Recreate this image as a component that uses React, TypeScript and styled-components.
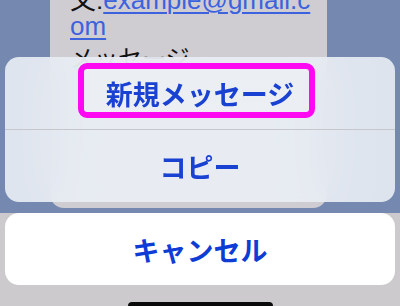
import React from 'react';
import styled, { createGlobalStyle } from 'styled-components';

const GlobalStyle = createGlobalStyle`
  html, body {
    margin: 0;
    padding: 0;
    background: #cdcacd;
  }
  body {
    font-family: "Liberation Sans", "Noto Sans CJK JP", sans-serif;
  }
`;

const actions = [
  { label: '新規メッセージ', highlighted: true },
  { label: 'コピー', highlighted: false },
];

export default function App() {
  return (
    <>
      <GlobalStyle />
      <Screen>
        <Backdrop>
          <MessageCard>
            <CardText>
              文:<MailLink>example@gmail.c<br />om</MailLink>
            </CardText>
            <CardLine>メッセージ</CardLine>
          </MessageCard>
          <ActionGroup>
            {actions.map((action) => (
              <ActionRow key={action.label}>
                {action.highlighted && <Highlight />}
                <ActionLabel>{action.label}</ActionLabel>
              </ActionRow>
            ))}
          </ActionGroup>
        </Backdrop>
        <BottomArea>
          <CancelButton>キャンセル</CancelButton>
          <HomeIndicator />
        </BottomArea>
      </Screen>
    </>
  );
}

const Screen = styled.div`
  width: 400px;
  height: 306px;
  display: flex;
  flex-direction: column;
  overflow: hidden;
`;

const Backdrop = styled.section`
  position: relative;
  height: 213px;
  flex-shrink: 0;
  background: #7589b0;
  padding-left: 50px;
  box-sizing: border-box;
  overflow: hidden;
`;

const MessageCard = styled.article`
  width: 277px;
  height: 208px;
  background: #cfcdd1;
  border-radius: 0 0 14px 14px;
  padding: 0 20px;
  box-sizing: border-box;
  overflow: hidden;
`;

const CardText = styled.p`
  margin: -13px 0 0;
  font-size: 26px;
  line-height: 26px;
  color: #111;
`;

const CardLine = styled.p`
  margin: 7px 0 0;
  font-size: 24px;
  line-height: 26px;
  color: #111;
`;

const MailLink = styled.span`
  color: #3c62de;
  text-decoration: underline;
  text-decoration-thickness: 2px;
  text-underline-offset: 3px;
`;

const ActionGroup = styled.div`
  position: absolute;
  left: 5px;
  right: 5px;
  top: 57px;
  display: flex;
  flex-direction: column;
  border-radius: 14px;
  overflow: hidden;
  background: rgba(234, 238, 245, 0.9);
  backdrop-filter: blur(24px);
`;

const ActionRow = styled.div`
  position: relative;
  height: 72px;
  display: flex;
  align-items: center;
  justify-content: center;

  & + & {
    border-top: 1px solid #c6c7cc;
  }
`;

const Highlight = styled.div`
  position: absolute;
  left: 73px;
  top: 6px;
  width: 237px;
  height: 55px;
  box-sizing: border-box;
  border: 6px solid #ff08f2;
  border-radius: 9px;
  background: rgba(255, 255, 255, 0.2);
`;

const ActionLabel = styled.span`
  position: relative;
  font-family: "Noto Sans CJK JP", sans-serif;
  font-size: 27px;
  font-weight: 600;
  color: #1a42d2;
`;

const BottomArea = styled.section`
  flex: 1;
  display: flex;
  flex-direction: column;
  align-items: center;
  padding: 0 5px;
  background: #cdcacd;
`;

const CancelButton = styled.button`
  width: 100%;
  height: 72px;
  border: none;
  border-radius: 14px;
  background: #ffffff;
  font-family: "Noto Sans CJK JP", sans-serif;
  font-size: 27px;
  font-weight: 700;
  color: #0f3cd4;
  padding: 0;
`;

const HomeIndicator = styled.div`
  width: 145px;
  height: 8px;
  margin-top: 17px;
  border-radius: 4px;
  background: #0a0a0a;
`;
